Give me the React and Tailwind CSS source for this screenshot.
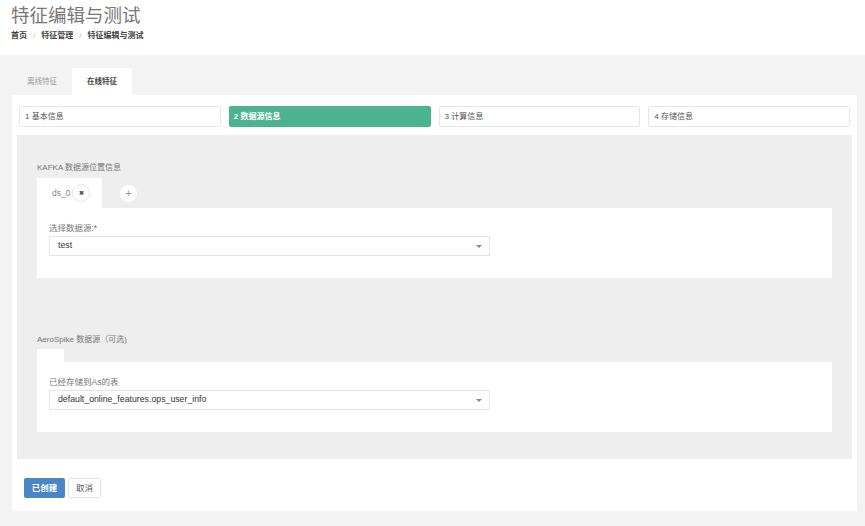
import { useState } from "react";

const font = { fontFamily: '"Liberation Sans", "Noto Sans CJK SC", sans-serif' };

const steps = ["1 基本信息", "2 数据源信息", "3 计算信息", "4 存储信息"];

function Select({ value }) {
  return (
    <div className="relative flex h-[20px] w-[441px] items-center border border-[#e5e5e5] bg-white pl-[8px] text-[8.75px] text-[#333]">
      {value}
      <span className="absolute right-[7px] top-[8px] h-0 w-0 border-x-[3px] border-t-[3px] border-x-transparent border-t-[#888]" />
    </div>
  );
}

function Card({ label, value }) {
  return (
    <div className="bg-white px-[12px] pb-[22px] pt-[14px]">
      <div className="mb-[2px] text-[8.5px] leading-[12px] text-[#777]">{label}</div>
      <Select value={value} />
    </div>
  );
}

export default function App() {
  const [tab, setTab] = useState(1);

  return (
    <div className="min-h-[526px] w-full bg-[#f3f3f3]" style={font}>
      <div className="h-[55px] bg-white px-[11px] pt-[5px]">
        <div className="text-[18.5px] leading-[22px] text-[#777]">特征编辑与测试</div>
        <div className="mt-[4px] flex items-center gap-[6px] text-[8px] leading-[10px] font-semibold text-[#444]">
          <span>首页</span>
          <span className="font-normal text-[#bbb]">/</span>
          <span>特征管理</span>
          <span className="font-normal text-[#bbb]">/</span>
          <span>特征编辑与测试</span>
        </div>
      </div>

      <div className="px-[12px] pt-[13px] pb-[15px]">
        <div className="flex h-[27px] text-[7.5px]">
          {["离线特征", "在线特征"].map((t, i) => (
            <button
              key={t}
              onClick={() => setTab(i)}
              className={
                "px-[15px] " +
                (tab === i ? "bg-white font-semibold text-[#444]" : "text-[#999]")
              }
            >
              {t}
            </button>
          ))}
        </div>

        <div className="w-[845px] bg-white px-[5px] pb-[13px] pt-[11px]">
          <div className="grid grid-cols-4 gap-[8px] px-[2px]">
            {steps.map((s, i) => (
              <div
                key={s}
                className={
                  "flex h-[21px] items-center rounded-[2px] px-[5px] text-[8px] " +
                  (i === 1
                    ? "bg-[#4cb391] font-semibold text-white"
                    : "border border-[#e6e6e6] text-[#555]")
                }
              >
                {s}
              </div>
            ))}
          </div>

          <div className="mt-[8px] bg-[#eeeeee] px-[20px] pb-[27px] pt-[27px]">
            <div className="text-[8px] leading-[12px] text-[#777]">KAFKA 数据源位置信息</div>
            <div className="mt-[4px] flex h-[30px] items-center">
              <div className="flex h-full w-[65px] items-center bg-white pl-[15px] text-[8.5px] text-[#888]">
                ds_0
                <span className="ml-[2px] flex h-[18px] w-[18px] items-center justify-center rounded-full border border-[#e5e5e5] bg-white text-[6px] font-bold text-[#555]">
                  ✖
                </span>
              </div>
              <span className="ml-[18px] flex h-[17px] w-[17px] items-center justify-center rounded-full bg-white text-[11px] text-[#999]">
                +
              </span>
            </div>
            <Card label="选择数据源:*" value="test" />

            <div className="mt-[56px] text-[8px] leading-[12px] text-[#777]">AeroSpike 数据源（可选)</div>
            <div className="mt-[3px] h-[13px] w-[27px] bg-white" />
            <Card label="已经存储到As的表" value="default_online_features.ops_user_info" />
          </div>

          <div className="mt-[19px] flex gap-[3px] pl-[7px]">
            <button className="h-[20px] w-[41px] rounded-[2px] bg-[#4a86c6] text-[8.5px] font-semibold text-white">
              已创建
            </button>
            <button className="h-[20px] w-[33px] rounded-[2px] border border-[#e3e3e3] bg-white text-[8.5px] text-[#555]">
              取消
            </button>
          </div>
        </div>
      </div>
    </div>
  );
}
